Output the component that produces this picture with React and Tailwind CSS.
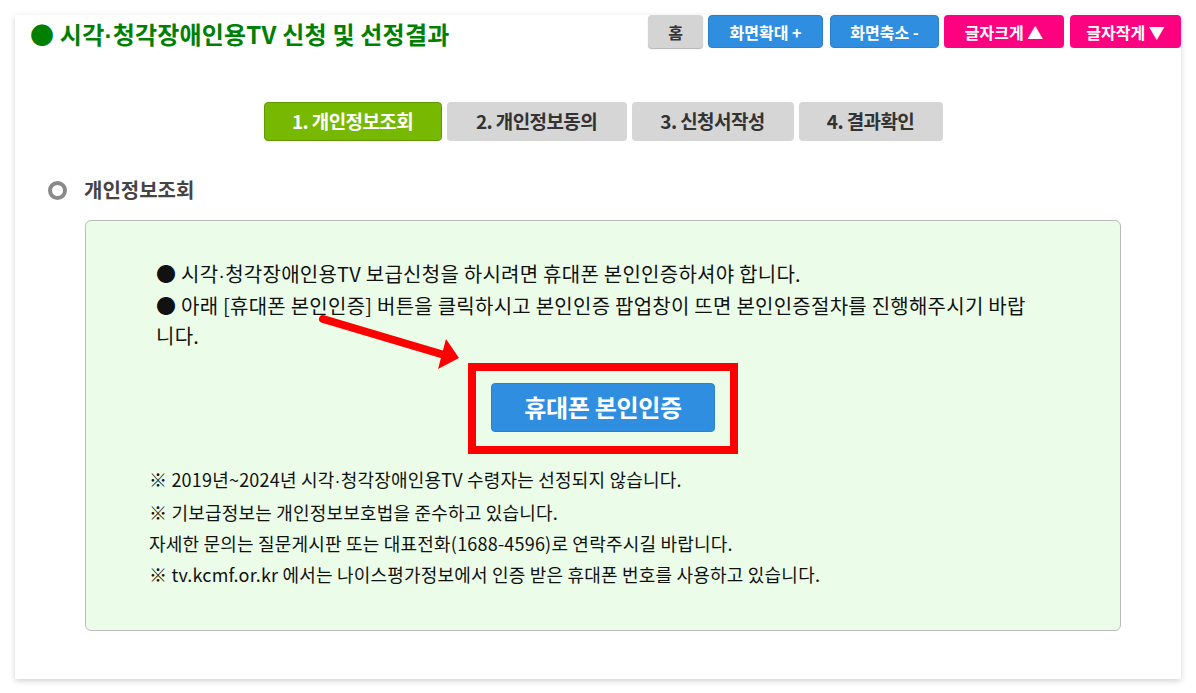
const font = { fontFamily: '"Noto Sans CJK KR", "Noto Sans", sans-serif' };

function Dot() {
  return <span style={{ fontFamily: '"Liberation Sans", sans-serif' }}>·</span>;
}

function TopButton({ children, color }) {
  return (
    <button
      className={`h-[33px] rounded-[4px] text-[16px] font-bold leading-none ${color}`}
    >
      {children}
    </button>
  );
}

const steps = [
  { label: "1. 개인정보조회", active: true, w: "w-[178px]" },
  { label: "2. 개인정보동의", active: false, w: "w-[180px]" },
  { label: "3. 신청서작성", active: false, w: "w-[162px]" },
  { label: "4. 결과확인", active: false, w: "w-[144px]" },
];

export default function App() {
  return (
    <div className="min-h-[693px] bg-white pt-[15px] pl-[15px]" style={font}>
      <div className="w-[1166px] h-[664px] bg-white shadow-[0_2px_6px_rgba(0,0,0,0.18)]">
        {/* header */}
        <div className="flex justify-between items-start">
          <h1 className="pl-[15px] pt-[1px] text-[24px] font-bold text-[#008000] tracking-[0.2px]">
            ● 시각<Dot />청각장애인용TV 신청 및 선정결과
          </h1>
          <div className="flex">
            <TopButton color="w-[55px] bg-[#d4d4d4] text-[#333] shadow-[0_1px_1px_rgba(0,0,0,0.3)]">홈</TopButton>
            <div className="w-[5px]" />
            <TopButton color="w-[115px] bg-[#2f8ee0] text-white border border-[#2a80cc]">화면확대 +</TopButton>
            <div className="w-[7px]" />
            <TopButton color="w-[109px] bg-[#2f8ee0] text-white border border-[#2a80cc]">화면축소 -</TopButton>
            <div className="w-[5px]" />
            <TopButton color="w-[120px] bg-[#ff0080] text-white rounded-[2px]">글자크게 ▲</TopButton>
            <div className="w-[6px]" />
            <TopButton color="w-[111px] bg-[#ff0080] text-white rounded-[2px]">글자작게 ▼</TopButton>
          </div>
        </div>

        {/* steps */}
        <div className="flex justify-center gap-[5px] mt-[48px] pl-[10px]">
          {steps.map((s) => (
            <div
              key={s.label}
              className={`${s.w} h-[39px] flex items-center justify-center rounded-[4px] text-[19px] font-bold tracking-[-0.6px] ${
                s.active
                  ? "bg-[#76b900] text-white border border-[#5f9a00]"
                  : "bg-[#d6d6d6] text-[#333]"
              }`}
            >
              {s.label}
            </div>
          ))}
        </div>

        {/* section title */}
        <div className="flex items-center mt-[34px] pl-[33px]">
          <span className="w-[19px] h-[19px] rounded-full border-[4px] border-[#8a8a8a]" />
          <span className="ml-[17px] text-[20px] font-bold text-[#444]">개인정보조회</span>
        </div>

        {/* green box */}
        <div className="relative mt-[15px] ml-[70px] mr-[60px] h-[411px] rounded-[6px] border border-[#bbbbbb] bg-[#ebfde9]">
          <div className="pt-[38px] pl-[70px] pr-[76px] text-[20px] leading-[30.5px] tracking-[0.25px] text-[#111]">
            <p>● 시각<Dot />청각장애인용TV 보급신청을 하시려면 휴대폰 본인인증하셔야 합니다.</p>
            <p>● 아래 [휴대폰 본인인증] 버튼을 클릭하시고 본인인증 팝업창이 뜨면 본인인증절차를 진행해주시기 바랍니다.</p>
          </div>

          <div className="flex justify-center mt-[11px]">
            <div className="border-[8px] border-[#ff0000] px-[15px] pt-[12px] pb-[14px]">
              <button className="w-[224px] h-[49px] rounded-[4px] bg-[#2f8ee0] border border-[#2a82d0] text-white text-[24px] font-bold tracking-[-0.3px]">
                휴대폰 본인인증
              </button>
            </div>
          </div>

          <div className="pt-[10px] pl-[63px] text-[18px] leading-[31px] text-[#111] tracking-[0.2px]">
            <p>※ 2019년~2024년 시각<Dot />청각장애인용TV 수령자는 선정되지 않습니다.</p>
            <p>※ 기보급정보는 개인정보보호법을 준수하고 있습니다.</p>
            <p>자세한 문의는 질문게시판 또는 대표전화(1688-4596)로 연락주시길 바랍니다.</p>
            <p>※ tv.kcmf.or.kr 에서는 나이스평가정보에서 인증 받은 휴대폰 번호를 사용하고 있습니다.</p>
          </div>

          {/* arrow */}
          <svg
            className="absolute left-[225px] top-[85px] pointer-events-none"
            width="160"
            height="70"
            viewBox="0 0 160 70"
          >
            <line x1="12" y1="13" x2="140" y2="51" stroke="#ff0000" strokeWidth="8" strokeLinecap="round" />
            <polygon points="148,52 135,33 127,63" fill="#ff0000" />
          </svg>
        </div>
      </div>
    </div>
  );
}
